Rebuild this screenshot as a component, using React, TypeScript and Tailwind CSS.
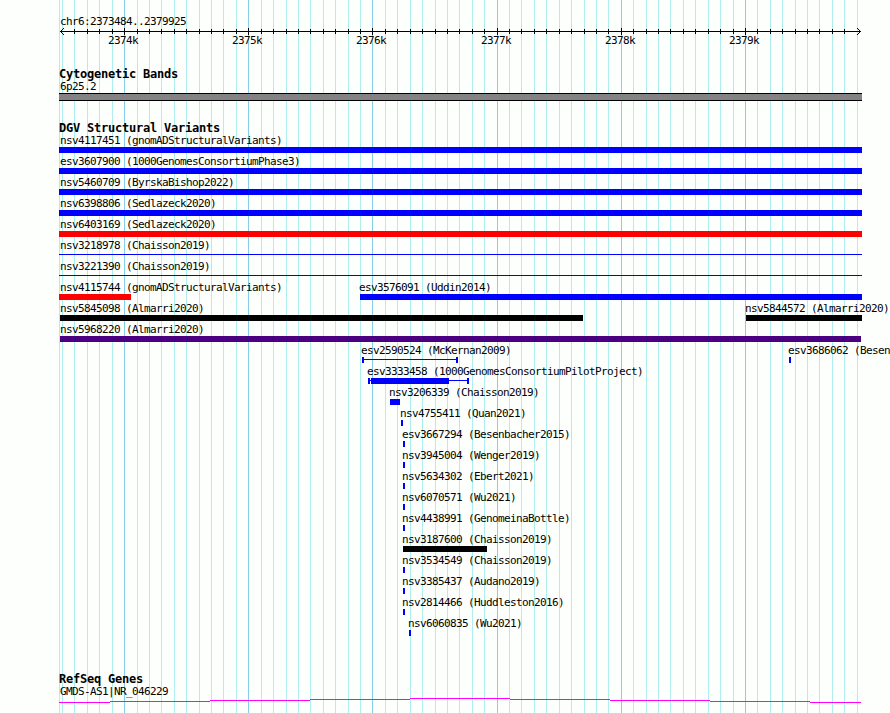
interface Feature {
  name: string;
  source: string;
  labelX: number;
  // [x, width] pairs in page pixels
  bars?: [number, number][];
  line?: [number, number];
  color?: string;
}

const LEFT = 59;
const WIDTH = 803;

const BLUE = "#0000ff";
const RED = "#ff0000";
const BLACK = "#000000";
const INDIGO = "#4b0082";

const full: [number, number][] = [[LEFT, WIDTH]];

const rows: Feature[][] = [
  [{ name: "nsv4117451", source: "gnomADStructuralVariants", labelX: 60, bars: full }],
  [{ name: "esv3607900", source: "1000GenomesConsortiumPhase3", labelX: 60, bars: full }],
  [{ name: "nsv5460709", source: "ByrskaBishop2022", labelX: 60, bars: full }],
  [{ name: "nsv6398806", source: "Sedlazeck2020", labelX: 60, bars: full }],
  [{ name: "nsv6403169", source: "Sedlazeck2020", labelX: 60, bars: full, color: RED }],
  [{ name: "nsv3218978", source: "Chaisson2019", labelX: 60, line: [LEFT, WIDTH] }],
  [{ name: "nsv3221390", source: "Chaisson2019", labelX: 60, line: [LEFT, WIDTH] }],
  [
    { name: "nsv4115744", source: "gnomADStructuralVariants", labelX: 60, bars: [[59, 72]], color: RED },
    { name: "esv3576091", source: "Uddin2014", labelX: 359, bars: [[360, 502]] },
  ],
  [
    { name: "nsv5845098", source: "Almarri2020", labelX: 60, bars: [[60, 523]], color: BLACK },
    { name: "nsv5844572", source: "Almarri2020", labelX: 745, bars: [[746, 116]], color: BLACK },
  ],
  [{ name: "nsv5968220", source: "Almarri2020", labelX: 60, bars: [[60, 801]], color: INDIGO }],
  [
    { name: "esv2590524", source: "McKernan2009", labelX: 361, bars: [[362, 2], [456, 2]], line: [362, 96] },
    { name: "esv3686062", source: "Besenbacher2015", labelX: 788, bars: [[789, 2]] },
  ],
  [
    {
      name: "esv3333458",
      source: "1000GenomesConsortiumPilotProject",
      labelX: 367,
      bars: [[368, 2], [371, 78], [467, 2]],
      line: [368, 101],
    },
  ],
  [{ name: "nsv3206339", source: "Chaisson2019", labelX: 389, bars: [[390, 10]] }],
  [{ name: "nsv4755411", source: "Quan2021", labelX: 400, bars: [[401, 2]] }],
  [{ name: "esv3667294", source: "Besenbacher2015", labelX: 402, bars: [[403, 2]] }],
  [{ name: "nsv3945004", source: "Wenger2019", labelX: 402, bars: [[403, 2]] }],
  [{ name: "nsv5634302", source: "Ebert2021", labelX: 402, bars: [[403, 2]] }],
  [{ name: "nsv6070571", source: "Wu2021", labelX: 402, bars: [[403, 2]] }],
  [{ name: "nsv4438991", source: "GenomeinaBottle", labelX: 402, bars: [[403, 2]] }],
  [{ name: "nsv3187600", source: "Chaisson2019", labelX: 402, bars: [[403, 84]], color: BLACK }],
  [{ name: "nsv3534549", source: "Chaisson2019", labelX: 402, bars: [[403, 2]] }],
  [{ name: "nsv3385437", source: "Audano2019", labelX: 402, bars: [[403, 2]] }],
  [{ name: "nsv2814466", source: "Huddleston2016", labelX: 402, bars: [[403, 2]] }],
  [{ name: "nsv6060835", source: "Wu2021", labelX: 408, bars: [[409, 2]] }],
];

// one tick every 100 bp, every tenth one is a labelled kilobase
const ticks = Array.from({ length: 65 }, (_, i) => ({
  x: Math.round(62 + i * 12.418),
  major: i % 10 === 5,
  label: `${2374 + (i - 5) / 10}k`,
}));

const geneSteps = [
  [59, 51, 702],
  [110, 100, 701],
  [210, 100, 700],
  [310, 100, 699],
  [410, 100, 698],
  [510, 100, 699],
  [610, 100, 700],
  [710, 100, 701],
  [810, 51, 702],
];

const GridLines = () => (
  <svg width="890" height="713" shapeRendering="crispEdges" className="[grid-area:1/1]">
    <rect x={LEFT} y="0" width="1" height="713" fill="#afeeee" />
    {ticks.map((t) => (
      <rect key={t.x} x={t.x} y="0" width="1" height="713" fill={t.major ? "#87ceeb" : "#afeeee"} />
    ))}
  </svg>
);

const Ruler = () => (
  <svg width="890" height="21" shapeRendering="crispEdges" className="block">
    <rect x="60" y="4" width="801" height="1" />
    {ticks.slice(1, -1).map((t) => (
      <rect key={t.x} x={t.x} y={t.major ? 1 : 2} width="1" height={t.major ? 7 : 5} />
    ))}
    {[1, 2, 3].map((d) => (
      <g key={d}>
        <rect x={60 + d} y={4 - d} width="1" height="1" />
        <rect x={60 + d} y={4 + d} width="1" height="1" />
        <rect x={860 - d} y={4 - d} width="1" height="1" />
        <rect x={860 - d} y={4 + d} width="1" height="1" />
      </g>
    ))}
    {ticks
      .filter((t) => t.major)
      .map((t) => (
        <text key={t.x} x={t.x - 16} y="17">
          {t.label}
        </text>
      ))}
  </svg>
);

const Title = ({ children }: { children: string }) => (
  <h2 className="h-[13px] pl-[59px] text-[12px] leading-[13px] tracking-[-0.225px] font-bold">
    {children}
  </h2>
);

const FeatureItem = ({ item }: { item: Feature }) => (
  <div className="[grid-area:1/1] min-w-0">
    <div className="h-[13px]" style={{ paddingLeft: item.labelX }}>
      {item.name} ({item.source})
    </div>
    <svg width="890" height="6" shapeRendering="crispEdges" className="block" fill={item.color ?? BLUE}>
      {item.line && <rect x={item.line[0]} y="2" width={item.line[1]} height="1" />}
      {item.bars?.map(([x, w]) => (
        <rect key={x} x={x} y="0" width={w} height="6" />
      ))}
    </svg>
  </div>
);

export default function App() {
  return (
    <div className="grid h-[713px] w-[890px] overflow-hidden bg-[#fdfffc] font-['DejaVu_Sans_Mono',monospace] text-[11px] leading-[13px] tracking-[-0.622px] whitespace-nowrap text-black">
      <GridLines />
      <main className="flex w-[890px] flex-col overflow-hidden [grid-area:1/1]">
        <div className="mt-[15px] h-3 pl-[60px]">chr6:2373484..2379925</div>
        <Ruler />

        <section className="mt-5">
          <Title>Cytogenetic Bands</Title>
          <div className="h-3 pl-[60px] leading-[12px]">6p25.2</div>
          <div className="ml-[59px] h-2 w-[803px] border-y border-black bg-[#848284]" />
        </section>

        <section className="mt-[21px]">
          <Title>DGV Structural Variants</Title>
          <div className="-mt-px">
            {rows.map((row) => (
              <div key={row[0].name} className="grid h-[21px] grid-cols-[890px]">
                {row.map((item) => (
                  <FeatureItem key={item.name} item={item} />
                ))}
              </div>
            ))}
          </div>
        </section>

        <section className="mt-[35px]">
          <Title>RefSeq Genes</Title>
          <div className="h-3 pl-[60px] leading-[12px]">GMDS-AS1|NR_046229</div>
          <svg width="890" height="10" shapeRendering="crispEdges" className="block" fill="#ff00ff">
            {geneSteps.map(([x, w, y]) => (
              <rect key={x} x={x} y={y - 698} width={w} height="1" />
            ))}
          </svg>
        </section>
      </main>
    </div>
  );
}
